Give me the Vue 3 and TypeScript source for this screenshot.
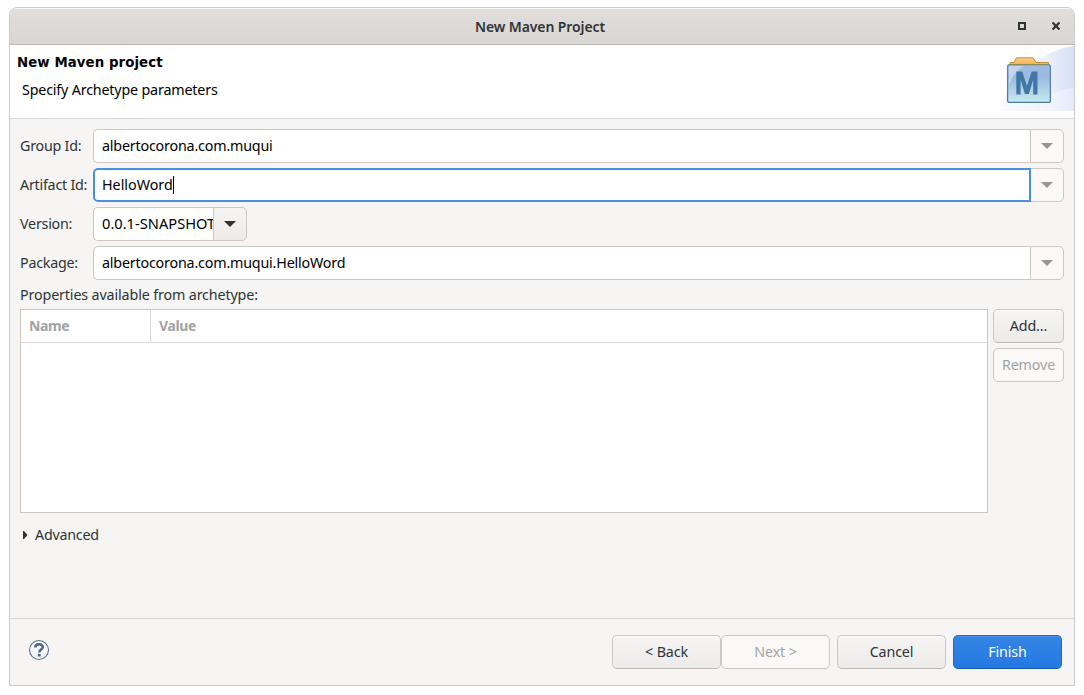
<script setup lang="ts">
import { ref } from 'vue'

interface Field {
  label: string
  value: string
  kind: 'wide' | 'focused' | 'short'
}

const fields = ref<Field[]>([
  { label: 'Group Id:', value: 'albertocorona.com.muqui', kind: 'wide' },
  { label: 'Artifact Id:', value: 'HelloWord', kind: 'focused' },
  { label: 'Version:', value: '0.0.1-SNAPSHOT', kind: 'short' },
  { label: 'Package:', value: 'albertocorona.com.muqui.HelloWord', kind: 'wide' },
])
</script>

<template>
  <main class="desktop">
    <section class="window">
      <header class="titlebar">
        <span class="caption">New Maven Project</span>
        <div class="controls">
          <svg width="8" height="8" viewBox="0 0 8 8"><path d="M1 1H7V7H1Z" fill="none" stroke="#2e3436" stroke-width="2" /></svg>
          <svg width="8" height="8" viewBox="0 0 8 8"><path d="M.5.5 7.5 7.5M7.5.5.5 7.5" fill="none" stroke="#2e3436" stroke-width="2.2" /></svg>
        </div>
      </header>

      <div class="banner">
        <div class="heading">
          <h1>New Maven project</h1>
          <p>Specify Archetype parameters</p>
        </div>
        <svg class="emblem" width="76" height="65" viewBox="998 46 76 65">
          <defs>
            <linearGradient id="wave" x1="0" x2="1" y1="0" y2="0">
              <stop offset="0" stop-color="#fafbfe" /><stop offset=".6" stop-color="#edf2fb" /><stop offset="1" stop-color="#d6e0f5" />
            </linearGradient>
            <linearGradient id="box" x1="0" x2="0" y1="0" y2="1">
              <stop offset="0" stop-color="#9dbbe0" /><stop offset=".35" stop-color="#9abbdf" /><stop offset="1" stop-color="#c6ebf0" />
            </linearGradient>
            <linearGradient id="tab" x1="0" x2="0" y1="0" y2="1">
              <stop offset="0" stop-color="#fbcf85" /><stop offset="1" stop-color="#f5ae4c" />
            </linearGradient>
            <linearGradient id="edge" x1="0" x2="0" y1="0" y2="1">
              <stop offset="0" stop-color="#5f86ae" /><stop offset="1" stop-color="#4d7d9c" />
            </linearGradient>
          </defs>
          <path d="M999 111C1006 82 1040 50 1074 46V111Z" fill="url(#wave)" />
          <path d="M1040 100C1052 93 1062 89 1074 88V111H1040Z" fill="#fff" opacity=".35" />
          <path d="M1010 65V62.5H1014L1016.5 57.8H1033L1036 62.5H1048.5V65Z" fill="url(#tab)" stroke="#c78f30" />
          <rect x="1007.6" y="64.6" width="42.8" height="37.8" rx="2" fill="url(#box)" stroke="url(#edge)" stroke-width="1.3" />
          <path d="M1010 64.5H1048" stroke="#8a8a5c" />
          <path d="M1008.8 86V68C1009 66.4 1010 66 1012 66H1024C1017 70 1011 77 1008.8 86Z" fill="#fff" opacity=".4" />
          <path d="M1016.3 94.5V71.5H1022.2L1027 86 1031.7 71.5H1037.5V94.5H1033.2V79.5L1028.9 94H1024.9L1020.6 79.5V94.5Z" fill="#4276a6" />
        </svg>
      </div>

      <div class="content">
        <div v-for="field in fields" :key="field.label" class="row">
          <label>{{ field.label }}</label>
          <div class="combo" :class="field.kind">
            <div class="entry"><span>{{ field.value }}</span><i v-if="field.kind === 'focused'" class="caret"></i></div>
            <button class="drop" type="button">
              <svg width="12" height="6" viewBox="0 0 12 6"><path d="M0 0H12L6 6Z" fill="currentColor" /></svg>
            </button>
          </div>
        </div>

        <div class="section-label">Properties available from archetype:</div>
        <div class="properties">
          <div class="table">
            <div class="thead"><span class="name">Name</span><span class="value">Value</span></div>
          </div>
          <div class="side">
            <button type="button" class="btn">Add...</button>
            <button type="button" class="btn off" disabled>Remove</button>
          </div>
        </div>

        <div class="advanced">
          <svg width="5" height="8" viewBox="0 0 5 8"><path d="M0 0H1L4.5 4 1 8H0Z" fill="#2e3436" /></svg>
          <span>Advanced</span>
        </div>
      </div>

      <footer class="footer">
        <svg class="help" width="22" height="22" viewBox="0 0 22 22">
          <circle cx="11" cy="11" r="9.5" fill="#f7f8fa" stroke="#5b7196" stroke-width="1.1" />
          <path d="M7.2 8.6C7.2 4.2 14.8 4.2 14.8 8.1C14.8 10.6 11.3 10.6 11.3 13.4" fill="none" stroke="#50618f" stroke-width="2.5" />
          <rect x="9.8" y="14.9" width="2.9" height="2.6" fill="#50618f" />
        </svg>
        <div class="actions">
          <button type="button" class="btn">&lt; Back</button>
          <button type="button" class="btn off" disabled>Next &gt;</button>
          <button type="button" class="btn gap">Cancel</button>
          <button type="button" class="btn gap primary">Finish</button>
        </div>
      </footer>
    </section>
  </main>
</template>

<style>
body { background: #fff; }
</style>

<style scoped>
* { box-sizing: border-box; }
.desktop {
  height: 695px;
  padding: 7px 9px 9px;
  overflow: hidden;
  font: 14.3px/20px "Noto Sans", sans-serif;
  letter-spacing: -0.14px;
  color: #2e3436;
}
.window {
  width: 1066px;
  height: 679px;
  display: flex;
  flex-direction: column;
  border: 1px solid #cbcbca;
  border-radius: 8px 8px 0 0;
  background: #f6f5f4;
  overflow: hidden;
}
.titlebar {
  flex: none;
  height: 37px;
  display: grid;
  grid-template-columns: 1fr auto 1fr;
  align-items: center;
  background: linear-gradient(#e1dedb, #dad6d2);
  border-bottom: 1px solid #bfb8b1;
  box-shadow: inset 0 1px #f8f7f6;
}
.caption { grid-column: 2; font-weight: 600; font-size: 14px; letter-spacing: -0.1px; padding: 1px 4px 0 0; }
.controls { display: flex; justify-content: flex-end; gap: 26px; padding-right: 14px; }
.banner {
  flex: none;
  height: 74px;
  display: flex;
  justify-content: space-between;
  background: #fff;
  border-bottom: 1px solid #dadada;
  color: #000;
}
.heading { padding: 8px 0 0 7px; }
h1 { margin: 0; font: bold 13.33px/20px "DejaVu Sans", sans-serif; letter-spacing: 0.07px; }
p { margin: 7px 0 0 5px; letter-spacing: -0.18px; }
.emblem { margin-top: 1px; }
.content { flex: 1; padding: 10px 10px 0; }
.row { display: flex; height: 34px; margin-bottom: 5px; align-items: center; }
label { width: 73px; flex: none; white-space: nowrap; letter-spacing: -0.24px; }
.combo { display: flex; flex: 1; height: 34px; }
.combo.short { flex: none; width: 154px; }
.entry {
  flex: 1;
  min-width: 0;
  display: flex;
  align-items: center;
  overflow: hidden;
  white-space: nowrap;
  padding: 0 0 0 8px;
  background: #fff;
  border: 1px solid #cdc7c2;
  border-right: 0;
  border-radius: 5px 0 0 5px;
  color: #000;
  letter-spacing: -0.19px;
}
.short .entry { font-size: 14.67px; letter-spacing: 0; padding-bottom: 2px; }
.focused .entry { border: 2px solid #4a90e2; padding-left: 7px; letter-spacing: 0; }
.caret { width: 1px; height: 18px; background: #000; }
.drop {
  width: 34px;
  flex: none;
  display: flex;
  align-items: center;
  justify-content: center;
  padding: 0;
  border: 1px solid #cdc7c2;
  border-radius: 0 5px 5px 0;
  background: #faf9f8;
  color: #949796;
}
.focused .drop { width: 33px; border-left: 0; }
.short .drop { background: linear-gradient(#f6f5f4, #edebe9); color: #2e3436; }
.section-label { height: 24px; line-height: 19px; }
.properties { display: flex; gap: 5px; }
.table { flex: 1; height: 204px; background: #fff; border: 1px solid #cdc7c2; }
.thead {
  display: flex;
  height: 33px;
  line-height: 32px;
  border-bottom: 1px solid #dbd8d5;
  font-weight: 700;
  font-size: 14px;
  letter-spacing: -0.35px;
  color: #a1a3a2;
}
.name { width: 130px; padding-left: 8px; border-right: 1px solid #dbd8d5; }
.value { padding-left: 8px; }
.side { width: 71px; display: flex; flex-direction: column; gap: 5px; }
.btn {
  height: 34px;
  padding: 0;
  border: 1px solid #cdc7c2;
  border-bottom-color: #bfb8b1;
  border-radius: 5px;
  background: linear-gradient(#f6f5f4, #edebe9);
  box-shadow: inset 0 1px #fff;
  font: inherit;
  letter-spacing: inherit;
  color: #2e3436;
}
.off { background: #faf9f8; border-color: #cdc7c2; color: #a1a4a3; box-shadow: none; }
.advanced { display: flex; align-items: center; gap: 7px; padding-left: 3px; margin-top: 12px; letter-spacing: -0.25px; }
.footer {
  flex: none;
  height: 67px;
  display: flex;
  justify-content: space-between;
  border-top: 1px solid #d9d8d7;
  padding: 16px 12px 0 18px;
}
.help { margin-top: 4px; }
.actions { display: flex; }
.actions .btn { width: 109px; }
.actions .gap { margin-left: 7px; }
.actions .primary {
  background: linear-gradient(#3584e4, #2379e2);
  border-color: #1b6acb;
  border-bottom-color: #15539e;
  box-shadow: inset 0 1px #4b92e8;
  color: #fff;
}
</style>
